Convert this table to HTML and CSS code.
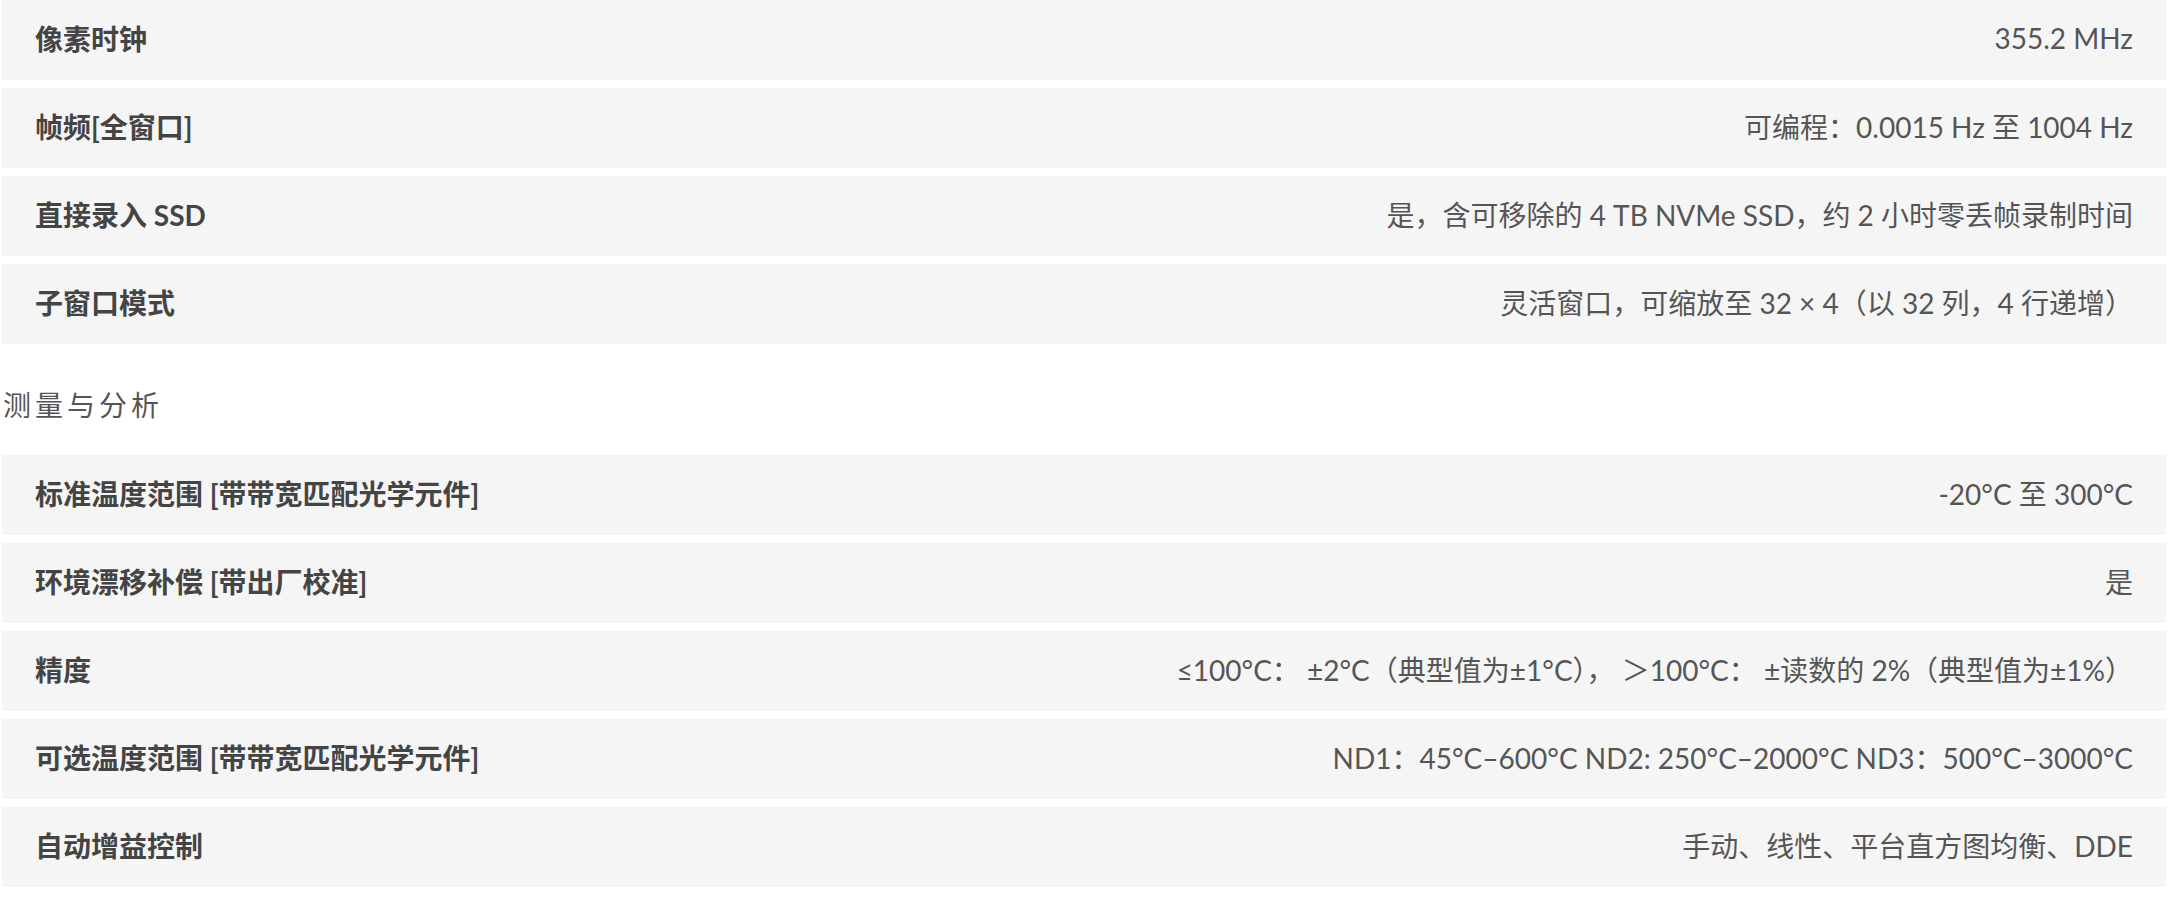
FILE: index.html
```html
<!DOCTYPE html>
<html lang="zh-CN">
<head>
<meta charset="utf-8">
<title>规格</title>
<link rel="stylesheet" href="styles.css">
</head>
<body>
<div class="specs">
  <div class="spec-group">
    <div class="spec-row">
      <div class="spec-label">像素时钟</div>
      <div class="spec-value">355.2 MHz</div>
    </div>
    <div class="spec-row">
      <div class="spec-label">帧频[全窗口]</div>
      <div class="spec-value">可编程：0.0015 Hz 至 1004 Hz</div>
    </div>
    <div class="spec-row">
      <div class="spec-label">直接录入 SSD</div>
      <div class="spec-value">是，含可移除的 4 TB NVMe SSD，约 2 小时零丢帧录制时间</div>
    </div>
    <div class="spec-row">
      <div class="spec-label">子窗口模式</div>
      <div class="spec-value">灵活窗口，可缩放至 32 × 4（以 32 列，4 行递增）</div>
    </div>
  </div>

  <h2 class="spec-heading">测量与分析</h2>

  <div class="spec-group">
    <div class="spec-row">
      <div class="spec-label">标准温度范围 [带带宽匹配光学元件]</div>
      <div class="spec-value">-20°C 至 300°C</div>
    </div>
    <div class="spec-row">
      <div class="spec-label">环境漂移补偿 [带出厂校准]</div>
      <div class="spec-value">是</div>
    </div>
    <div class="spec-row">
      <div class="spec-label">精度</div>
      <div class="spec-value">≤100°C： ±2°C（典型值为±1°C）， ＞100°C： ±读数的 2%（典型值为±1%）</div>
    </div>
    <div class="spec-row">
      <div class="spec-label">可选温度范围 [带带宽匹配光学元件]</div>
      <div class="spec-value">ND1：45°C–600°C ND2: 250°C–2000°C ND3：500°C–3000°C</div>
    </div>
    <div class="spec-row">
      <div class="spec-label">自动增益控制</div>
      <div class="spec-value">手动、线性、平台直方图均衡、DDE</div>
    </div>
  </div>
</div>
</body>
</html>
```

FILE: styles.css
```css
body {
  margin: 0;
  background-color: #fff;
  font-family: "Lato", "Noto Sans CJK SC", sans-serif;
  font-size: 28px;
  color: #555;
  }
.specs {
  padding: 0 2px;
  }
.spec-group {
  display: flex;
  flex-direction: column;
  gap: 8px;
  }
.spec-row {
  box-sizing: border-box;
  display: flex;
  align-items: center;
  justify-content: space-between;
  height: 80px;
  padding: 0 33px 4px 33px;
  background-color: #f5f5f5;
  }
.spec-label {
  font-weight: 700;
  color: #444;
  white-space: nowrap;
  }
.spec-value {
  color: #555;
  text-align: right;
  white-space: nowrap;
  }
.spec-heading {
  box-sizing: border-box;
  display: flex;
  align-items: center;
  height: 111px;
  margin: 0;
  padding: 8px 0 0 1px;
  font-size: 28px;
  font-weight: 400;
  letter-spacing: 4px;
  color: #555;
  }
```
